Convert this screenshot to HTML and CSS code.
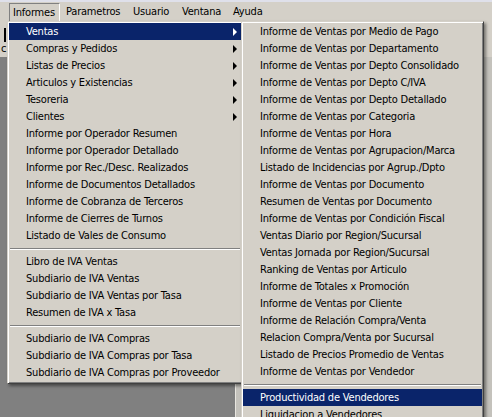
FILE: index.html
```html
<!DOCTYPE html>
<html lang="es">
<head>
    <meta charset="UTF-8">
    <title>Informes</title>
    <link rel="stylesheet" href="styles.css">
</head>
<body>
<div class="screen">
    <div class="title-edge"></div>
    <div class="menubar">
        <span class="mb-item mb-open">Informes</span>
        <span class="mb-item mb-param">Parametros</span>
        <span class="mb-item mb-user">Usuario</span>
        <span class="mb-item mb-win">Ventana</span>
        <span class="mb-item mb-help">Ayuda</span>
    </div>
    <div class="toolbar">
        <span class="tb-bar"></span>
        <span class="tb-c">c</span>
    </div>
    <div class="workspace">
        <div class="child-win"></div>
    </div>

    <!-- menu Informes -->
    <ul class="menu menu-main">
        <li class="item sub hot">Ventas</li>
        <li class="item sub">Compras y Pedidos</li>
        <li class="item sub">Listas de Precios</li>
        <li class="item sub">Articulos y Existencias</li>
        <li class="item sub">Tesoreria</li>
        <li class="item sub">Clientes</li>
        <li class="item">Informe por Operador Resumen</li>
        <li class="item">Informe por Operador Detallado</li>
        <li class="item">Informe por Rec./Desc. Realizados</li>
        <li class="item">Informe de Documentos Detallados</li>
        <li class="item">Informe de Cobranza de Terceros</li>
        <li class="item">Informe de Cierres de Turnos</li>
        <li class="item">Listado de Vales de Consumo</li>
        <li class="sep"></li>
        <li class="item">Libro de IVA Ventas</li>
        <li class="item">Subdiario de IVA Ventas</li>
        <li class="item">Subdiario de IVA Ventas por Tasa</li>
        <li class="item">Resumen de IVA x Tasa</li>
        <li class="sep"></li>
        <li class="item">Subdiario de IVA Compras</li>
        <li class="item">Subdiario de IVA Compras por Tasa</li>
        <li class="item">Subdiario de IVA Compras por Proveedor</li>
    </ul>

    <!-- submenu Ventas -->
    <ul class="menu menu-sub">
        <li class="item">Informe de Ventas por Medio de Pago</li>
        <li class="item">Informe de Ventas por Departamento</li>
        <li class="item">Informe de Ventas por Depto Consolidado</li>
        <li class="item">Informe de Ventas por Depto C/IVA</li>
        <li class="item">Informe de Ventas por Depto Detallado</li>
        <li class="item">Informe de Ventas por Categoria</li>
        <li class="item">Informe de Ventas por Hora</li>
        <li class="item">Informe de Ventas por Agrupacion/Marca</li>
        <li class="item">Listado de Incidencias por Agrup./Dpto</li>
        <li class="item">Informe de Ventas por Documento</li>
        <li class="item">Resumen de Ventas por Documento</li>
        <li class="item">Informe de Ventas por Condición Fiscal</li>
        <li class="item">Ventas Diario por Region/Sucursal</li>
        <li class="item">Ventas Jornada por Region/Sucursal</li>
        <li class="item">Ranking de Ventas por Articulo</li>
        <li class="item">Informe de Totales x Promoción</li>
        <li class="item">Informe de Ventas por Cliente</li>
        <li class="item">Informe de Relación Compra/Venta</li>
        <li class="item">Relacion Compra/Venta por Sucursal</li>
        <li class="item">Listado de Precios Promedio de Ventas</li>
        <li class="item">Informe de Ventas por Vendedor</li>
        <li class="sep"></li>
        <li class="item hot">Productividad de Vendedores</li>
        <li class="item">Liquidacion a Vendedores</li>
    </ul>
</div>
</body>
</html>
```

FILE: styles.css
```css
*{
    margin:0;
    padding:0;
    box-sizing:border-box;
}
body{
    background:#808080;
    font-family:"DejaVu Sans Condensed","DejaVu Sans",sans-serif;
    font-size:11px;
    letter-spacing:-0.2px;
    color:#000;
}
.screen{
    position:relative;
    width:492px;
    height:417px;
    overflow:hidden;
    display:flex;
    flex-direction:column;
}
.title-edge{
    height:2px;
    background:#dfe0ea;
}
/* barra de menu */
.menubar{
    height:20px;
    background:#d4d0c8;
    display:flex;
    padding-left:9px;
    padding-top:1px;
}
.mb-item{
    height:19px;
    line-height:18px;
    padding-left:6px;
    white-space:nowrap;
}
.mb-open{
    width:51px;
    padding-left:3px;
    border:1px solid;
    border-color:#808080 #fff #fff #808080;
}
.mb-param{ width:67px; }
.mb-user{ width:49px; }
.mb-win{ width:51px; }
.mb-help{ width:44px; }

.toolbar{
    height:35px;
    background:#d4d0c8;
    position:relative;
}
.tb-bar{
    position:absolute;
    left:4px;
    top:6px;
    width:2px;
    height:14px;
    background:#000;
}
.tb-c{
    position:absolute;
    left:1px;
    top:20px;
}
.workspace{
    flex:1;
    display:flex;
    background:#808080;
}
.child-win{
    margin-left:235px;
    flex:1;
    background:#c4c2bc;
    border-left:1px solid #e8e6e0;
}

/* menus desplegables */
.menu{
    list-style:none;
    position:absolute;
    top:21px;
    background:#d4d0c8;
    border:1px solid;
    border-color:#d4d0c8 #404040 #404040 #d4d0c8;
    box-shadow:inset 1px 1px #fff, inset -1px -1px #808080, 2px 2px 3px rgba(0,0,0,.45);
    padding:1px 1px 2px;
}
.menu-main{
    left:7px;
    width:236px;
}
.menu-sub{
    left:241px;
    width:243px;
    z-index:2;
}
.item{
    height:17px;
    line-height:17px;
    padding-left:17px;
    white-space:nowrap;
    position:relative;
}
.item.hot{
    background:#0a246a;
    color:#fff;
}
.sub::after{
    content:"";
    position:absolute;
    right:4px;
    top:5px;
    border-top:4px solid transparent;
    border-bottom:4px solid transparent;
    border-left:4px solid currentColor;
}
.sep{
    height:9px;
    padding:4px 1px 0;
}
.sep::before{
    content:"";
    display:block;
    height:1px;
    background:#808080;
    border-bottom:1px solid #fff;
    box-sizing:content-box;
}
```
